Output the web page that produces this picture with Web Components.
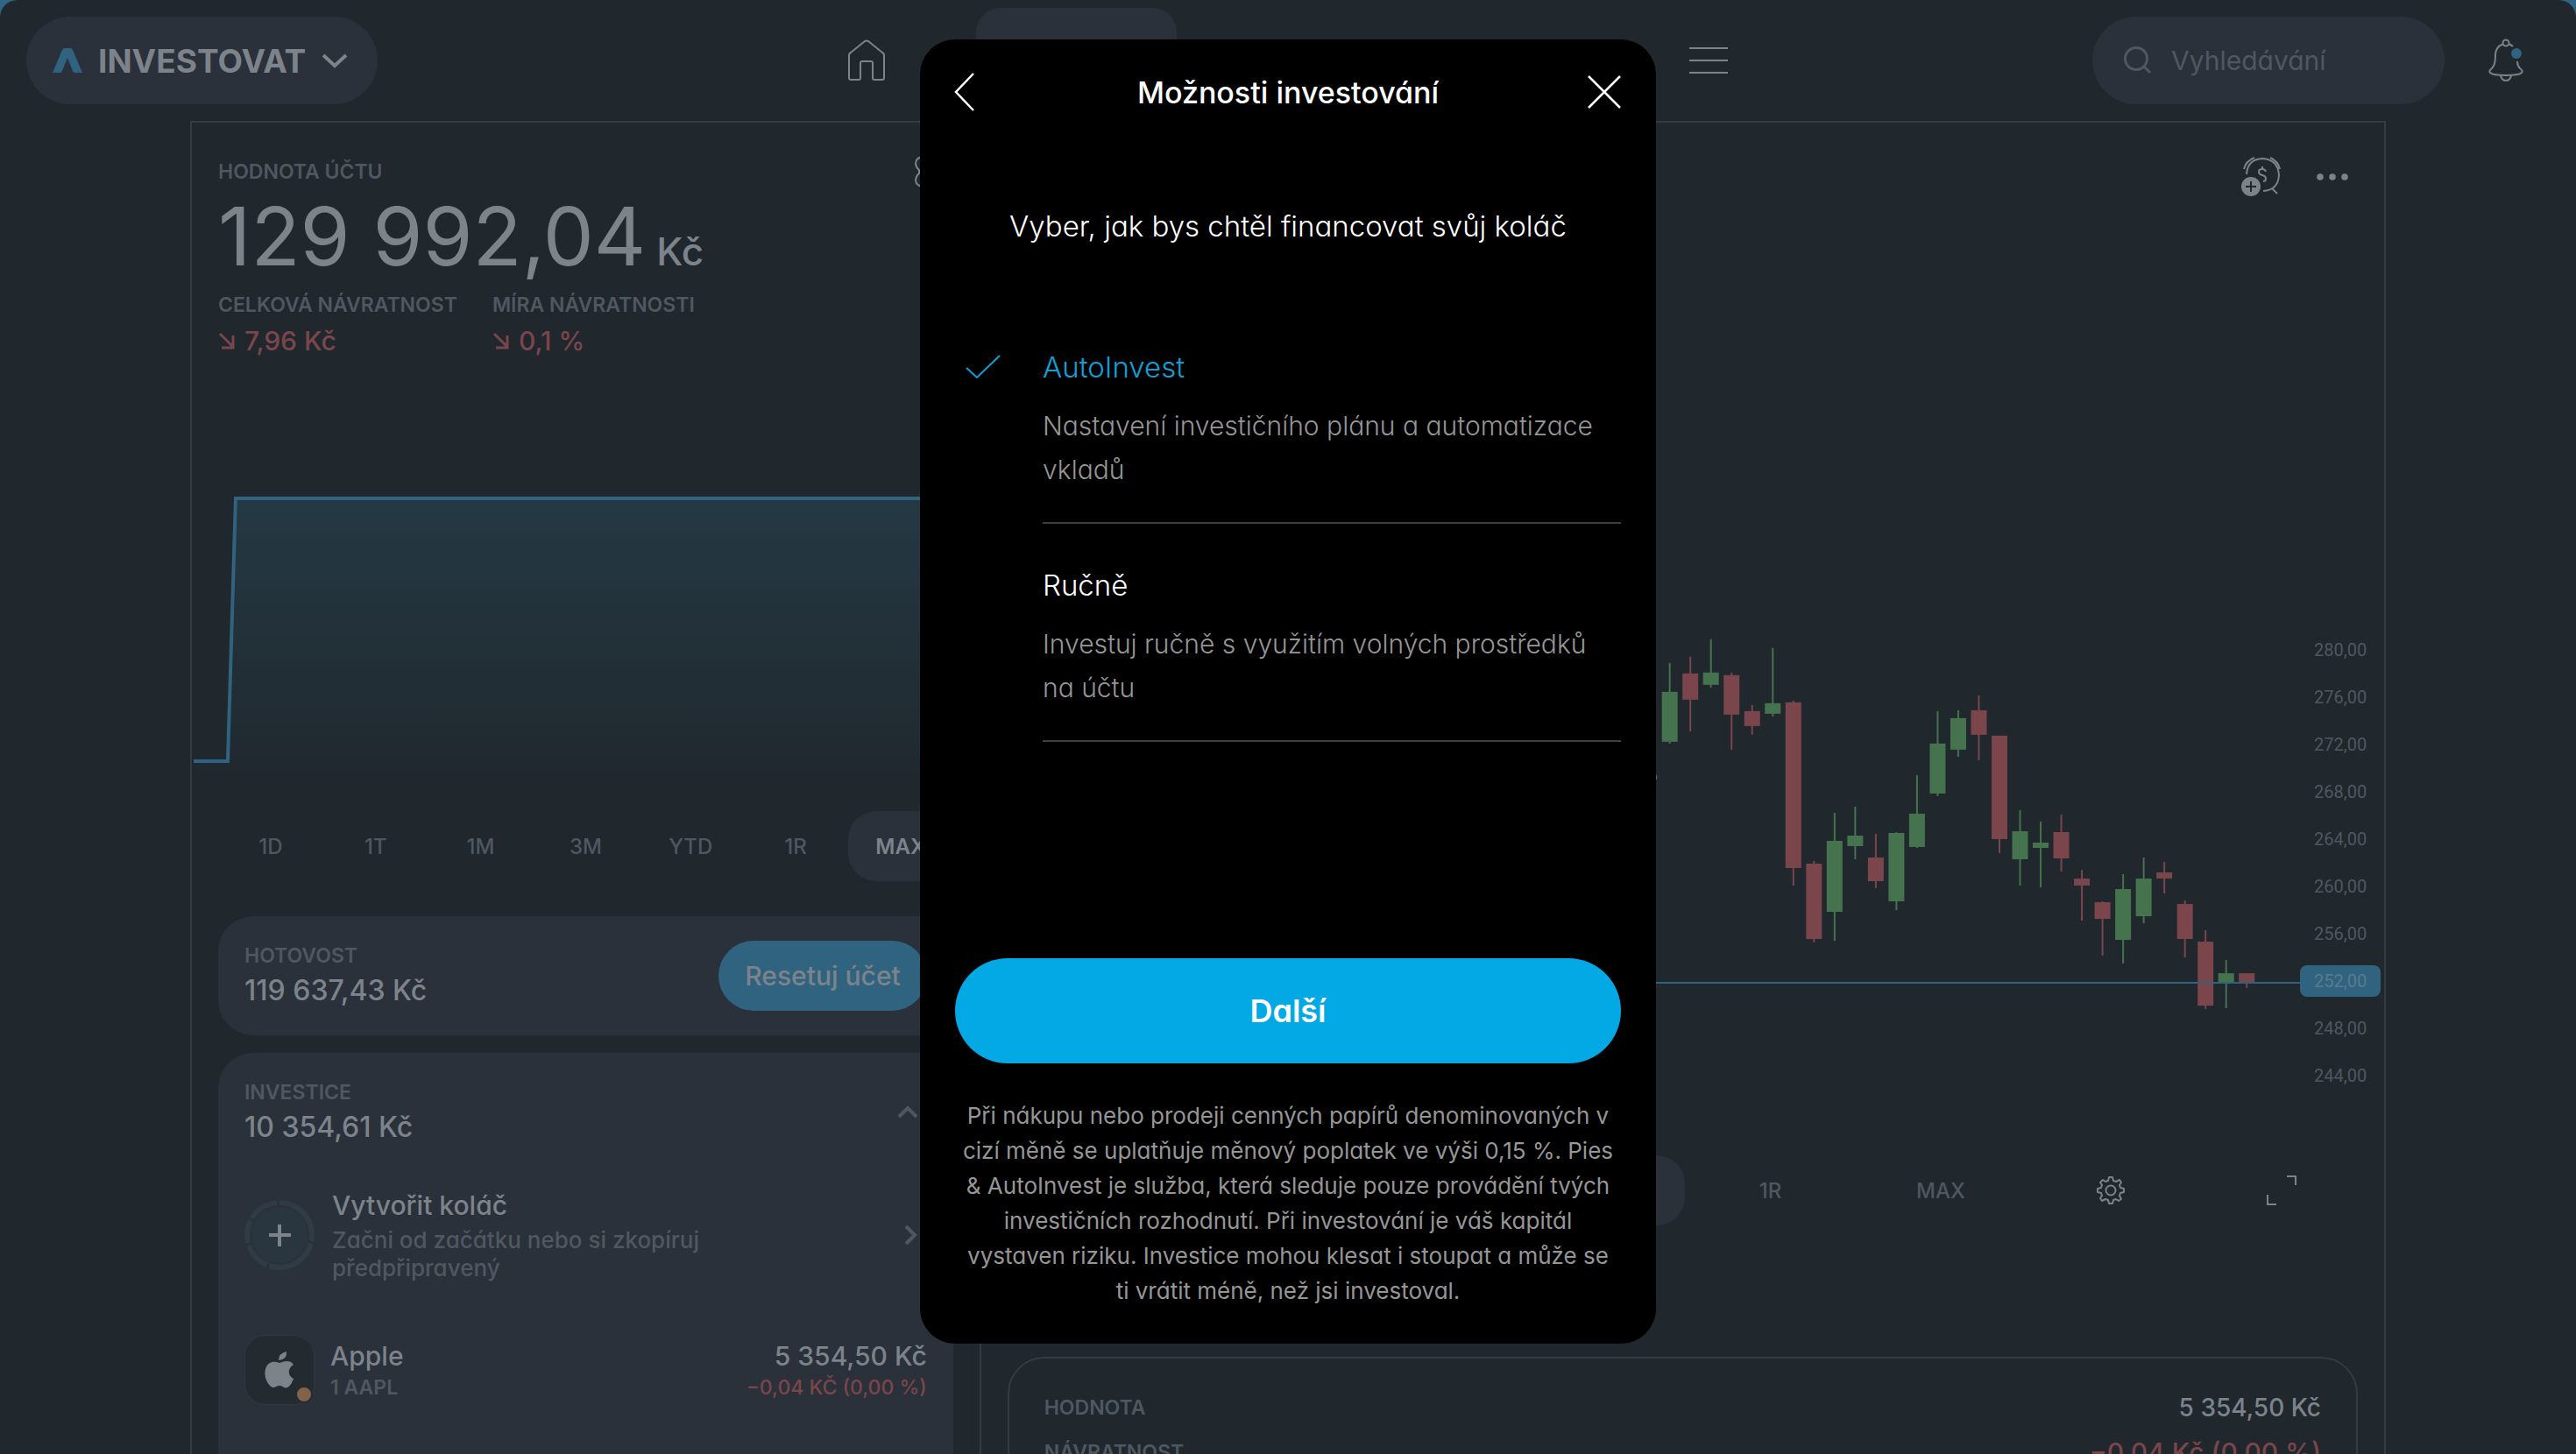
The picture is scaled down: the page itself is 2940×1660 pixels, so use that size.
<!DOCTYPE html>
<html lang="cs">
<head>
<meta charset="utf-8">
<title>Investovat</title>
<style>
  html, body {
    height: 100%;
  }
  body {
    --page: #20272d;
    --surface: #2a313a;
    --line: #343b43;
    --text: #7d838a;
    --muted: #4f5860;
    --blue: #30637f;
    --red: #7a464b;
    --green: #44734e;
    margin: 0;
    overflow: hidden;
    background: #2f6687;
    color: var(--text);
    font-family: Inter, "Open Sans", sans-serif;
    font-feature-settings: "cv11";
    font-size: 24px;
  }
</style>
</head>
<body>
<app-shell>
  <top-bar slot="bar"></top-bar>
  <account-panel>
    <range-tabs slot="ranges" items="1D,1T,1M,3M,YTD,1R,MAX" active="MAX"></range-tabs>
    <balance-card slot="cards" label="HOTOVOST" value="119 637,43 Kč">
      <button slot="action">Resetuj účet</button>
    </balance-card>
    <balance-card slot="cards" label="INVESTICE" value="10 354,61 Kč" open>
      <app-icon slot="action" name="up"></app-icon>
      <pie-row></pie-row>
      <holding-row name="Apple" amount="1 AAPL" price="5 354,50 Kč" change="−0,04 KČ (0,00 %)"></holding-row>
    </balance-card>
  </account-panel>
  <instrument-panel></instrument-panel>
  <invest-dialog slot="dialog">
    <invest-option heading="AutoInvest" checked>Nastavení investičního plánu a automatizace vkladů</invest-option>
    <invest-option heading="Ručně">Investuj ručně s využitím volných prostředků na účtu</invest-option>
  </invest-dialog>
</app-shell>

<script>
const icons = {
  logo: [34, 28, `<path d="M0 28 11 2Q12 0 14 0H20Q22 0 23 2L34 28H26Q24 28 23 26L17 11 11 26Q10 28 8 28Z" fill="currentColor" stroke="none"/>`],
  down: [30, 18, `<path d="M2 3 15 15 28 3" stroke-width="4"/>`],
  up: [24, 16, `<path d="M2 13 12 3 22 13" stroke-width="4"/>`],
  right: [14, 24, `<path d="M2 2 12 12 2 22" stroke-width="4"/>`],
  home: [42, 48, `<path d="M1 18Q1 16 3 15L19 2Q21 1 23 2L39 15Q41 16 41 18V44Q41 46 39 46H30Q28 46 28 44V27Q28 25 26 25H16Q14 25 14 27V44Q14 46 12 46H3Q1 46 1 44Z"/>`],
  menu: [44, 32, `<path d="M0 2H44M0 16H44M0 30H44"/>`],
  search: [32, 32, `<circle cx="14" cy="14" r="12.5" stroke-width="3"/><path d="M23 23 30 30" stroke-width="3"/>`],
  bell: [40, 48, `<path d="M28 8Q25 5 20 5 8 6 8 19 8 29 4 33 0 36 2 38 5 41 20 41 35 41 38 38 40 36 36 33 33 30 33 25"/><circle cx="20" cy="4" r="3.5" fill="var(--page)"/><path d="M14 41Q15 47 20 47 25 47 26 41"/><circle cx="32" cy="16" r="6" fill="var(--blue)" stroke="none"/>`],
  alarm: [48, 46, `<path d="M7 20Q8 3 25 2 43 3 44 21 43 38 26 39M4 14Q6 5 16 1M34 1Q43 5 45 14M36 36 42 42"/><path d="M29 17Q28 14 25 14 21 14 21 17 21 20 25 21 29 22 29 25 29 28 26 28M25 11V14"/><circle cx="12" cy="34" r="11" fill="currentColor" stroke="none"/><path d="M12 28V40M6 34H18" stroke="var(--page)"/>`],
  dots: [38, 10, `<g fill="currentColor" stroke="none"><circle cx="5" cy="5" r="3.8"/><circle cx="19" cy="5" r="3.8"/><circle cx="33" cy="5" r="3.8"/></g>`],
  fall: [20, 20, `<path d="M2 2 17 17M17 4V18H4" stroke-width="3"/>`],
  gear: [32, 32, `<path d="M13 5 14 1H18L19 5 22 6 26 4 28 7 26 10 27 13 31 14V18L27 19 26 22 28 26 25 28 22 26 19 27 18 31H14L13 27 10 26 6 28 4 25 6 22 5 19 1 18V14L5 13 6 10 4 7 7 4 10 6Z" stroke-linejoin="round"/><circle cx="16" cy="16" r="5.5"/>`],
  flower: [44, 44, `<path d="M9 5Q1 6 1 13 2 18 5 20V24Q2 26 1 31 1 38 9 39 14 44 22 40 30 44 35 39 43 38 43 31 42 26 39 24V20Q42 18 43 13 43 6 35 5 30 0 22 4 14 0 9 5Z"/>`],
  expand: [36, 36, `<path d="M24 2H34V12M2 23V34H12"/>`],
  back: [38, 44, `<path d="M21 1 1 22 21 43" stroke-width="2.5"/>`],
  close: [38, 38, `<path d="M1 1 37 37M37 1 1 37" stroke-width="2.5"/>`],
  check: [40, 28, `<path d="M1 15 13 26 39 1"/>`],
  apple: [34, 42, `<path d="M25 0Q26 9 16 10 16 2 25 0ZM17 13C21 12 28 8 33 15C26 19 26 28 33 31C29 42 25 42 22 41C18 38 15 39 11 41C7 42-2 32 1 20C4 10 12 11 17 13Z" fill="currentColor" stroke="none"/>`]
}

class AppIcon extends HTMLElement {
  connectedCallback() {
    const [width, height, shape] = icons[this.getAttribute("name")]
    this.attachShadow({ mode: "open" }).innerHTML = /*html*/ `
      <style>
        :host { display: inline-flex; flex: none; }
        svg { display: block; overflow: visible; }
      </style>
      <svg width="${width}" height="${height}" viewBox="0 0 ${width} ${height}" fill="none" stroke="currentColor" stroke-width="2" aria-hidden="true">${shape}</svg>
    `
  }
}
customElements.define("app-icon", AppIcon)

class AppShell extends HTMLElement {
  constructor() {
    super()
    this.attachShadow({ mode: "open" }).innerHTML = /*html*/ `
      <style>
        :host {
          display: flex;
          flex-direction: column;
          height: 100vh;
          overflow: hidden;
          border-radius: 20px 20px 0 0;
          background: var(--page);
        }
        main {
          display: grid;
          grid-template-columns: 36fr 64fr;
          flex: 1;
          min-height: 0;
          margin: 0 217px;
          border: 2px solid var(--line);
          border-bottom: 0;
        }
      </style>
      <slot name="bar"></slot>
      <main><slot></slot></main>
      <slot name="dialog"></slot>
    `
  }
}
customElements.define("app-shell", AppShell)

class TopBar extends HTMLElement {
  constructor() {
    super()
    this.attachShadow({ mode: "open" }).innerHTML = /*html*/ `
      <style>
        * { box-sizing: border-box; }
        :host {
          display: grid;
          grid-template-columns: 1fr auto 1fr;
          align-items: center;
          height: 138px;
          padding: 0 30px;
        }
        button, a {
          display: flex;
          align-items: center;
          padding: 0;
          border: 0;
          background: none;
          color: inherit;
          font: inherit;
        }
        .mode {
          justify-self: start;
          gap: 18px;
          height: 100px;
          padding: 0 34px 0 30px;
          border-radius: 50px;
          background: var(--surface);
          font-size: 37px;
          font-weight: 700;
        }
        .mode .logo { color: var(--blue); }
        nav {
          display: flex;
          align-items: center;
          gap: 104px;
          width: 1004px;
        }
        .tab {
          width: 229px;
          height: 120px;
          border-radius: 28px;
          background: var(--surface);
        }
        nav .menu { margin-left: auto; }
        .side {
          display: flex;
          align-items: center;
          justify-content: flex-end;
          gap: 50px;
          padding-right: 30px;
        }
        label {
          display: flex;
          align-items: center;
          gap: 22px;
          width: 402px;
          height: 100px;
          padding: 0 36px;
          border-radius: 50px;
          background: var(--surface);
          color: var(--muted);
        }
        input {
          flex: 1;
          min-width: 0;
          padding: 0;
          border: 0;
          outline: 0;
          background: none;
          font: inherit;
          font-feature-settings: inherit;
          font-size: 30px;
        }
        input::placeholder { color: var(--muted); }
      </style>
      <button class="mode"><app-icon class="logo" name="logo"></app-icon>INVESTOVAT<app-icon name="down"></app-icon></button>
      <nav>
        <a href="#"><app-icon name="home"></app-icon></a>
        <a class="tab" href="#"></a>
        <button class="menu"><app-icon name="menu"></app-icon></button>
      </nav>
      <div class="side">
        <label><app-icon name="search"></app-icon><input type="search" placeholder="Vyhledávání"></label>
        <button><app-icon name="bell"></app-icon></button>
      </div>
    `
  }
}
customElements.define("top-bar", TopBar)

class RangeTabs extends HTMLElement {
  connectedCallback() {
    const active = this.getAttribute("active")
    const items = this.getAttribute("items").split(",")
    this.attachShadow({ mode: "open" }).innerHTML = /*html*/ `
      <style>
        :host { display: grid; grid-auto-flow: column; grid-auto-columns: 1fr; }
        button {
          height: 80px;
          padding: 0;
          border: 0;
          border-radius: 32px;
          background: none;
          color: var(--muted);
          font: inherit;
          font-size: 24px;
          font-weight: 500;
        }
        .active { background: var(--surface); color: var(--text); font-weight: 600; }
      </style>
      ${items.map((item) => `<button class="${item === active ? "active" : ""}">${item}</button>`).join("")}
    `
  }
}
customElements.define("range-tabs", RangeTabs)

class AccountPanel extends HTMLElement {
  constructor() {
    super()
    this.attachShadow({ mode: "open" }).innerHTML = /*html*/ `
      <style>
        :host {
          display: flex;
          flex-direction: column;
          min-width: 0;
          border-right: 2px solid var(--line);
        }
        header { padding: 40px 30px 0; }
        .title { display: flex; align-items: center; justify-content: space-between; height: 32px; margin-bottom: 8px; }
        .label { line-height: 32px; color: var(--muted); font-size: 23px; font-weight: 600; }
        .total {
          display: flex;
          align-items: baseline;
          gap: 12px;
          font-size: 92px;
          line-height: 100px;
        }
        .total small { line-height: 44px; font-size: 44px; font-weight: 500; }
        .returns { display: flex; gap: 40px; margin-top: 12px; }
        .change {
          display: flex;
          align-items: center;
          gap: 10px;
          margin-top: 5px;
          line-height: 40px;
          color: var(--red);
          font-size: 30px;
          font-weight: 500;
        }
        .chart { display: block; width: 100%; height: 420px; margin-top: 91px; }
        section { padding: 6px 30px 0; }
        .cards { display: grid; gap: 20px; margin-top: 40px; }
      </style>
      <header>
        <div class="title"><span class="label">HODNOTA ÚČTU</span><app-icon name="flower"></app-icon></div>
        <div class="total"><span>129 992,04</span><small>Kč</small></div>
        <div class="returns">
          <div><div class="label">CELKOVÁ NÁVRATNOST</div><div class="change"><app-icon name="fall"></app-icon>7,96 Kč</div></div>
          <div><div class="label">MÍRA NÁVRATNOSTI</div><div class="change"><app-icon name="fall"></app-icon>0,1 %</div></div>
        </div>
      </header>
      <svg class="chart" viewBox="0 0 900 420" preserveAspectRatio="none" aria-hidden="true">
        <defs>
          <linearGradient id="fade" x1="0" y1="0" x2="0" y2="1">
            <stop offset="0" stop-color="#243944"/>
            <stop offset="1" stop-color="#20272d"/>
          </linearGradient>
        </defs>
        <path d="M2 369H42L50 69H900V408H2Z" fill="url(#fade)"/>
        <path d="M2 369H41L50 69H900" fill="none" stroke="#30637f" stroke-width="4"/>
      </svg>
      <section>
        <slot name="ranges"></slot>
        <div class="cards"><slot name="cards"></slot></div>
      </section>
    `
  }
}
customElements.define("account-panel", AccountPanel)

class BalanceCard extends HTMLElement {
  connectedCallback() {
    this.attachShadow({ mode: "open" }).innerHTML = /*html*/ `
      <style>
        :host { display: block; border-radius: 40px; background: var(--surface); }
        :host([open]) { padding-bottom: 120px; }
        .head {
          display: flex;
          align-items: center;
          justify-content: space-between;
          height: 136px;
          padding: 0 30px;
        }
        .label { line-height: 32px; color: var(--muted); font-size: 23px; font-weight: 600; }
        .value { margin-top: 2px; line-height: 44px; font-size: 32px; font-weight: 500; }
        ::slotted(button) {
          height: 80px;
          padding: 0 30px;
          border: 0;
          border-radius: 40px;
          background: var(--blue);
          color: var(--text);
          font: inherit;
          font-feature-settings: inherit;
          font-size: 30px;
          font-weight: 500;
        }
        ::slotted(app-icon) { margin-right: 10px; color: var(--muted); }
      </style>
      <div class="head">
        <div>
          <div class="label">${this.getAttribute("label")}</div>
          <div class="value">${this.getAttribute("value")}</div>
        </div>
        <slot name="action"></slot>
      </div>
      <slot></slot>
    `
  }
}
customElements.define("balance-card", BalanceCard)

class PieRow extends HTMLElement {
  constructor() {
    super()
    this.attachShadow({ mode: "open" }).innerHTML = /*html*/ `
      <style>
        :host {
          display: flex;
          align-items: center;
          gap: 20px;
          padding: 18px 42px 0 30px;
        }
        svg { flex: none; }
        .text { flex: 1; }
        .name { line-height: 40px; font-size: 30px; font-weight: 500; }
        .note { max-width: 460px; margin-top: 4px; line-height: 32px; color: var(--muted); font-size: 26px; font-weight: 500; }
        app-icon { color: var(--muted); }
      </style>
      <svg width="80" height="80" viewBox="0 0 80 80" fill="none" aria-hidden="true">
        <circle cx="40" cy="40" r="32" fill="#2a363f"/>
        <circle cx="40" cy="40" r="37" stroke="#303c45" stroke-width="6" stroke-dasharray="65 3 60 3 31 3 26 3 35 3" transform="rotate(-90 40 40)"/>
        <path d="M40 28V53M28 40H53" stroke="#7d838a" stroke-width="4"/>
      </svg>
      <div class="text">
        <div class="name">Vytvořit koláč</div>
        <div class="note">Začni od začátku nebo si zkopíruj předpřipravený</div>
      </div>
      <app-icon name="right"></app-icon>
    `
  }
}
customElements.define("pie-row", PieRow)

class HoldingRow extends HTMLElement {
  connectedCallback() {
    this.attachShadow({ mode: "open" }).innerHTML = /*html*/ `
      <style>
        :host {
          display: flex;
          align-items: center;
          gap: 18px;
          padding: 60px 30px 0;
          font-weight: 500;
        }
        .logo {
          position: relative;
          display: grid;
          place-items: center;
          width: 78px;
          height: 78px;
          border: 1px solid #2f373f;
          border-radius: 24px;
          background: #242b30;
        }
        .dot {
          position: absolute;
          right: 1px;
          bottom: 1px;
          width: 16px;
          height: 16px;
          border: 2px solid #242b30;
          border-radius: 50%;
          background: #846248;
        }
        .name, .price { line-height: 40px; font-size: 30px; }
        .amount, .change { line-height: 32px; font-size: 23px; }
        .amount { color: var(--muted); font-weight: 600; }
        .quote { margin-left: auto; text-align: right; }
        .change { color: var(--red); }
      </style>
      <div class="logo"><app-icon name="apple"></app-icon><span class="dot"></span></div>
      <div>
        <div class="name">${this.getAttribute("name")}</div>
        <div class="amount">${this.getAttribute("amount")}</div>
      </div>
      <div class="quote">
        <div class="price">${this.getAttribute("price")}</div>
        <div class="change">${this.getAttribute("change")}</div>
      </div>
    `
  }
}
customElements.define("holding-row", HoldingRow)

// high, body top, body bottom, low, rising
const candles = [
  [186, 186, 191, 191, 1],
  [58, 91, 148, 150, 1],
  [51, 70, 100, 136, 0],
  [31, 69, 83, 86, 1],
  [69, 72, 117, 157, 0],
  [106, 113, 130, 140, 0],
  [41, 104, 116, 119, 1],
  [101, 103, 292, 312, 0],
  [284, 287, 373, 377, 0],
  [229, 261, 342, 375, 1],
  [222, 255, 267, 282, 1],
  [253, 280, 307, 315, 0],
  [251, 252, 330, 340, 1],
  [186, 230, 268, 269, 1],
  [113, 150, 207, 210, 1],
  [112, 121, 157, 165, 1],
  [95, 112, 140, 169, 0],
  [141, 141, 259, 275, 0],
  [226, 250, 282, 312, 1],
  [239, 263, 269, 314, 1],
  [231, 251, 281, 296, 0],
  [294, 304, 312, 352, 0],
  [330, 331, 350, 392, 0],
  [299, 316, 374, 401, 1],
  [280, 304, 347, 355, 1],
  [285, 297, 304, 321, 0],
  [329, 333, 373, 394, 0],
  [363, 376, 449, 453, 0],
  [397, 412, 423, 452, 1],
  [412, 412, 423, 429, 0]
]

class CandleChart extends HTMLElement {
  connectedCallback() {
    const bars = candles.map(([high, top, bottom, low, rising], i) => {
      const x = 761.5 + i * 23.5
      return `<g fill="${rising ? "#44734e" : "#7a464b"}">
        <rect x="${x - 1}" y="${high}" width="2" height="${low - high}"/>
        <rect x="${x - 9}" y="${top}" width="18" height="${bottom - top}"/>
      </g>`
    })
    const prices = []
    for (let price = 280; price >= 244; price -= 4) {
      prices.push(`<li><span class="${price === 252 ? "now" : ""}">${price},00</span></li>`)
    }
    this.attachShadow({ mode: "open" }).innerHTML = /*html*/ `
      <style>
        :host { display: flex; height: 560px; }
        svg { flex: 1; min-width: 0; height: 560px; }
        ul {
          width: 96px;
          margin: 0;
          padding: 16px 0 0;
          list-style: none;
          color: var(--muted);
          font-family: Roboto, sans-serif;
          font-size: 20px;
        }
        li { display: flex; align-items: center; height: 54px; }
        span { padding: 6px 16px; line-height: 24px; border-radius: 8px; }
        .now { background: var(--blue); color: #5b7a8c; }
      </style>
      <svg viewBox="0 0 1504 560" preserveAspectRatio="xMaxYMid slice" aria-hidden="true">
        ${bars.join("")}
        <path d="M0 423H1504" stroke="#30637f" stroke-width="2"/>
      </svg>
      <ul>${prices.join("")}</ul>
    `
  }
}
customElements.define("candle-chart", CandleChart)

class InstrumentPanel extends HTMLElement {
  constructor() {
    super()
    this.attachShadow({ mode: "open" }).innerHTML = /*html*/ `
      <style>
        :host { display: block; min-width: 0; }
        button { display: flex; padding: 0; border: 0; background: none; color: inherit; font: inherit; font-weight: 500; }
        header {
          display: flex;
          align-items: center;
          justify-content: flex-end;
          gap: 38px;
          height: 48px;
          padding: 38px 40px 0 0;
        }
        candle-chart { margin-top: 473px; }
        .ranges {
          display: grid;
          grid-template-columns: repeat(8, 1fr);
          margin: 60px 20px 0 26px;
        }
        .ranges > * { display: grid; place-items: center; height: 80px; }
        .active { grid-column: 4; border-radius: 32px; background: var(--surface); }
        .text { color: var(--muted); }
        .stats {
          margin: 150px 30px 0;
          padding: 31px 40px 40px;
          border: 2px solid var(--line);
          border-radius: 42px;
        }
        .stats div { display: flex; justify-content: space-between; line-height: 51px; }
        dt { color: var(--muted); font-size: 23px; font-weight: 600; }
        dd { margin: 0; font-size: 28px; font-weight: 500; }
        .loss { color: var(--red); font-size: 30px; }
      </style>
      <header>
        <button><app-icon name="alarm"></app-icon></button>
        <button><app-icon name="dots"></app-icon></button>
      </header>
      <candle-chart></candle-chart>
      <div class="ranges">
        <button class="active"></button>
        <button class="text">1R</button>
        <button class="text">MAX</button>
        <button><app-icon name="gear"></app-icon></button>
        <button><app-icon name="expand"></app-icon></button>
      </div>
      <dl class="stats">
        <div><dt>HODNOTA</dt><dd>5 354,50 Kč</dd></div>
        <div><dt>NÁVRATNOST</dt><dd class="loss">−0,04 Kč (0,00 %)</dd></div>
      </dl>
    `
  }
}
customElements.define("instrument-panel", InstrumentPanel)

class InvestOption extends HTMLElement {
  connectedCallback() {
    const checked = this.hasAttribute("checked")
    this.attachShadow({ mode: "open" }).innerHTML = /*html*/ `
      <style>
        :host { display: block; }
        label { display: grid; grid-template-columns: 100px 1fr; }
        .mark { display: grid; place-items: center start; height: 44px; padding-left: 12px; }
        .mark > * { grid-area: 1 / 1; }
        input { appearance: none; width: 40px; height: 28px; margin: 0; }
        app-icon { display: none; color: #10a0d8; }
        :host([checked]) app-icon { display: inline-flex; }
        .body { padding-bottom: 35px; border-bottom: 2px solid #3a3f40; }
        .heading { line-height: 44px; color: #fff; font-size: 33px; font-weight: 300; }
        :host([checked]) .heading { color: #10a0d8; }
        .note { margin-top: 20px; line-height: 50px; color: #969696; font-size: 30px; font-weight: 300; }
      </style>
      <label>
        <span class="mark"><input type="radio" name="funding" ${checked ? "checked" : ""}><app-icon name="check"></app-icon></span>
        <span class="body">
          <div class="heading">${this.getAttribute("heading")}</div>
          <div class="note"><slot></slot></div>
        </span>
      </label>
    `
  }
}
customElements.define("invest-option", InvestOption)

class InvestDialog extends HTMLElement {
  constructor() {
    super()
    this.attachShadow({ mode: "open" }).innerHTML = /*html*/ `
      <style>
        * { box-sizing: border-box; }
        :host {
          position: absolute;
          inset: 0;
          display: flex;
          justify-content: center;
          align-items: flex-start;
          padding-top: 45px;
        }
        .dialog {
          width: 840px;
          max-width: 100%;
          padding: 0 40px 40px;
          border-radius: 40px;
          background: #000;
          color: #fff;
          text-align: center;
        }
        header { display: flex; align-items: center; justify-content: space-between; height: 120px; }
        header button { display: flex; padding: 0; border: 0; background: none; color: inherit; }
        h1 { margin: 0; font-size: 34px; font-weight: 500; }
        h2 { margin: 71px 0 0; line-height: 44px; font-size: 33px; font-weight: 300; }
        .options { display: grid; gap: 48px; margin-top: 117px; text-align: left; }
        .next {
          width: 100%;
          height: 120px;
          margin-top: 247px;
          border: 0;
          border-radius: 60px;
          background: #03a9e4;
          color: #fff;
          font: inherit;
          font-feature-settings: inherit;
          font-size: 36px;
          font-weight: 600;
        }
        p { margin: 40px 0 0; padding: 0 4px; line-height: 40px; color: #969696; font-size: 26px; }
      </style>
      <div class="dialog" role="dialog" aria-modal="true">
        <header>
          <button><app-icon name="back"></app-icon></button>
          <h1>Možnosti investování</h1>
          <button><app-icon name="close"></app-icon></button>
        </header>
        <h2>Vyber, jak bys chtěl financovat svůj koláč</h2>
        <div class="options"><slot></slot></div>
        <button class="next">Další</button>
        <p>Při nákupu nebo prodeji cenných papírů denominovaných v cizí měně se uplatňuje měnový poplatek ve výši 0,15 %. Pies &amp; AutoInvest je služba, která sleduje pouze provádění tvých investičních rozhodnutí. Při investování je váš kapitál vystaven riziku. Investice mohou klesat i stoupat a může se ti vrátit méně, než jsi investoval.</p>
      </div>
    `
  }
}
customElements.define("invest-dialog", InvestDialog)
</script>
</body>
</html>
